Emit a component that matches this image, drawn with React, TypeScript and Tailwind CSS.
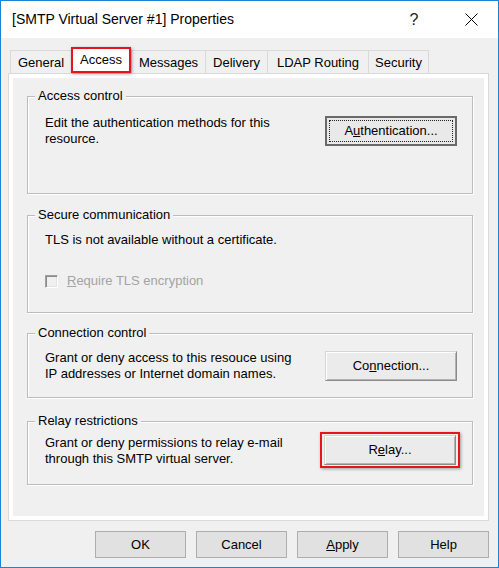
import React from "react";

type GroupBoxProps = {
  title: string;
  className: string;
  children: React.ReactNode;
};

// etched frame with the caption sitting on the top line
const GroupBox: React.FC<GroupBoxProps> = ({ title, className, children }) => (
  <div
    className={`relative shrink-0 border border-[#bcbcbc] shadow-[inset_1px_1px_0_#ffffff,1px_1px_0_#ffffff] ${className}`}
  >
    <span className="absolute left-[7px] -top-[8px] px-[3px] bg-[#f0f0f0] leading-[14px]">
      {title}
    </span>
    {children}
  </div>
);

const SideButton: React.FC<{ children: React.ReactNode }> = ({ children }) => (
  <div className="w-[132px] h-[30px] flex items-center justify-center bg-[#ebebeb] border border-t-[#d5d5d5] border-l-[#d5d5d5] border-r-[#8c8c8c] border-b-[#8c8c8c] shadow-[inset_1px_1px_0_#ffffff,inset_-1px_-1px_0_#b4b4b4]">
    {children}
  </div>
);

const DialogButton: React.FC<{ children: React.ReactNode }> = ({ children }) => (
  <div className="w-[91px] h-[27px] flex items-center justify-center bg-[#e1e1e1] border border-[#adadad]">
    {children}
  </div>
);

const tabs = [
  { label: "General", w: "w-[61px]" },
  { label: "Access", w: "w-[60px]", active: true },
  { label: "Messages", w: "w-[74px]" },
  { label: "Delivery", w: "w-[62px]" },
  { label: "LDAP Routing", w: "w-[101px]" },
  { label: "Security", w: "w-[61px]", last: true },
];

export default function App() {
  return (
    <div className="w-[499px] h-[568px] border border-[#1883d7] bg-[#f0f0f0] flex flex-col text-[13px] text-black font-['Liberation_Sans',Arial,sans-serif]">
      {/* Title bar */}
      <div className="h-[37px] shrink-0 bg-white flex items-center">
        <span className="flex-1 pl-[11px] text-[14px]">
          [SMTP Virtual Server #1] Properties
        </span>
        <span className="w-[20px] text-center text-[16px] leading-none text-[#222]">?</span>
        <span className="ml-[37px] mr-[17px] w-[20px] flex justify-center">
          <svg width="13" height="13" viewBox="0 0 13 13">
            <path d="M0.5 0.5 L12.5 12.5 M12.5 0.5 L0.5 12.5" stroke="#000" strokeWidth="1" />
          </svg>
        </span>
      </div>

      <div className="flex-1 pl-[7px] pr-[9px] pt-[9px]">
        {/* Tabs */}
        <div className="h-[26px] flex items-end pl-[2px]">
          {tabs.map((t) =>
            t.active ? (
              <div
                key={t.label}
                className={`${t.w} h-[26px] border-2 border-[#e8141b] bg-white flex items-center justify-center shadow-[1px_1px_3px_rgba(0,0,0,0.35)] relative z-10`}
              >
                {t.label}
              </div>
            ) : (
              <div
                key={t.label}
                className={`${t.w} h-[23px] border-t border-l ${t.last ? "border-r" : ""} border-[#d9d9d9] bg-[#f0f0f0] flex items-center justify-center pt-[1px]`}
              >
                {t.label}
              </div>
            )
          )}
        </div>

        {/* Tab page */}
        <div className="h-[448px] border border-[#d9d9d9] bg-white p-[4px]">
          <div className="h-full bg-[#f0f0f0] pl-[14px] pr-[11px] pt-[18px] flex flex-col">
            <GroupBox title="Access control" className="h-[98px]">
              <div className="flex justify-between items-start pl-[17px] pr-[15px] pt-[18px]">
                <p className="leading-[16px]">
                  Edit the authentication methods for this
                  <br />
                  resource.
                </p>
                <div className="w-[132px] h-[30px] mt-[1px] border-2 border-[#6a6a6a] bg-[#e9e9e9] p-[2px]">
                  <div className="h-full border border-dotted border-[#222] flex items-center justify-center">
                    <span>
                      A<span className="underline">u</span>thentication...
                    </span>
                  </div>
                </div>
              </div>
            </GroupBox>

            <GroupBox title="Secure communication" className="h-[98px] mt-[21px]">
              <div className="pl-[17px] pt-[16px]">
                <p className="leading-[16px]">TLS is not available without a certificate.</p>
                <div className="flex items-center mt-[25px]">
                  <span className="w-[13px] h-[13px] border border-t-[#a0a0a0] border-l-[#a0a0a0] border-r-white border-b-white shadow-[inset_1px_1px_0_#8a8a8a,inset_-1px_-1px_0_#e3e3e3] bg-[#f0f0f0]" />
                  <span className="ml-[9px] text-[#a3a3a3] leading-[16px]">
                    <span className="underline">R</span>equire TLS encryption
                  </span>
                </div>
              </div>
            </GroupBox>

            <GroupBox title="Connection control" className="h-[65px] mt-[20px]">
              <div className="flex justify-between items-start pl-[17px] pr-[15px] pt-[16px]">
                <p className="leading-[16px]">
                  Grant or deny access to this resouce using
                  <br />
                  IP addresses or Internet domain names.
                </p>
                <div className="mt-[1px]">
                  <SideButton>
                    <span>
                      Co<span className="underline">n</span>nection...
                    </span>
                  </SideButton>
                </div>
              </div>
            </GroupBox>

            <GroupBox title="Relay restrictions" className="h-[64px] mt-[23px]">
              <div className="flex justify-between items-start pl-[17px] pr-[12px] pt-[10px]">
                <p className="leading-[16px] mt-[3px]">
                  Grant or deny permissions to relay e-mail
                  <br />
                  through this SMTP virtual server.
                </p>
                <div className="border-2 border-[#e8141b] px-[2px] py-[1px] shadow-[1px_1px_3px_rgba(0,0,0,0.35)]">
                  <SideButton>
                    <span>
                      R<span className="underline">e</span>lay...
                    </span>
                  </SideButton>
                </div>
              </div>
            </GroupBox>
          </div>
        </div>

        {/* Dialog buttons */}
        <div className="flex justify-end gap-[10px] mt-[10px]">
          <DialogButton>OK</DialogButton>
          <DialogButton>Cancel</DialogButton>
          <DialogButton>
            <span>
              <span className="underline">A</span>pply
            </span>
          </DialogButton>
          <DialogButton>Help</DialogButton>
        </div>
      </div>
    </div>
  );
}
